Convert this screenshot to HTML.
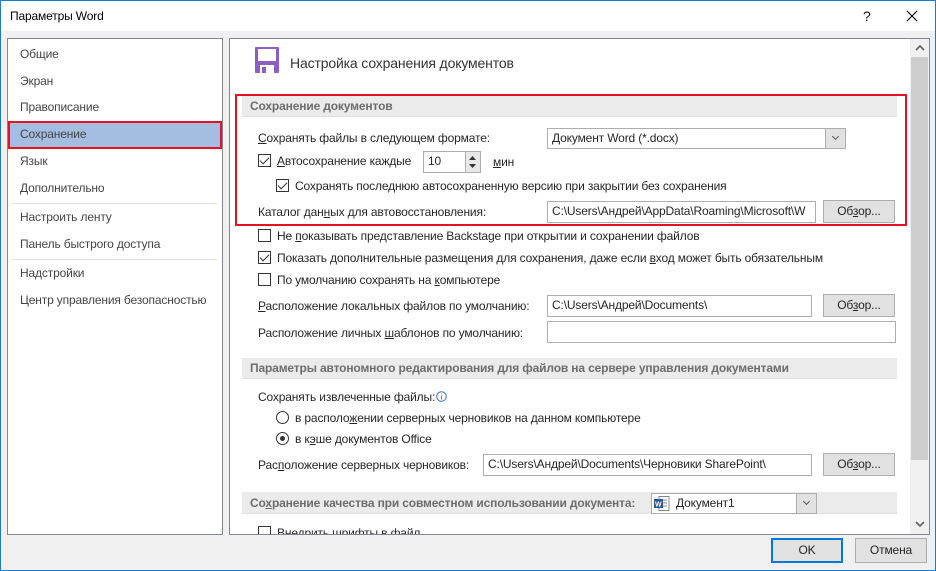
<!DOCTYPE html>
<html><head><meta charset="utf-8"><style>
*{margin:0;padding:0;box-sizing:border-box}
body{width:936px;height:571px;overflow:hidden;background:#f0f0f0;font-family:"Liberation Sans",sans-serif;font-size:12px;color:#262626;position:relative;letter-spacing:-0.15px}
.a{position:absolute;white-space:nowrap}
.win{position:absolute;left:0;top:0;width:936px;height:571px;border:1px solid #1979ca;pointer-events:none}
.tb{position:absolute;left:1px;top:1px;width:934px;height:30px;background:#fff}
.panel{position:absolute;background:#fff;border:1px solid #828790}
.li{position:absolute;left:20px;color:#444;font-size:12px;line-height:14px}
.sep{position:absolute;left:12px;width:205px;height:1px;background:#e3e3e3}
.hdr{position:absolute;left:242px;width:655px;height:21px;background:#ebebeb;border-bottom:1px solid #e0e0e0;color:#6d6d6d;font-weight:bold;font-size:12px;padding:4px 8px;line-height:13px}
.t{position:absolute;line-height:14px}
.cb{position:absolute;width:13px;height:13px;border:1px solid #333;background:#fff}
.cb.c::after{content:"";position:absolute;left:3px;top:0px;width:4px;height:8px;border:solid #333;border-width:0 1.3px 1.3px 0;transform:rotate(45deg)}
.in{position:absolute;border:1px solid #adadad;background:#fff;padding:2px 4px;line-height:15px;overflow:hidden}
.btn{position:absolute;background:#e1e1e1;border:1px solid #adadad;text-align:center;line-height:21px}
.rd{position:absolute;width:13px;height:13px;border:1px solid #333;border-radius:50%;background:#fff}
.dd{position:absolute;top:0;right:0;width:20px;height:100%;background:#e1e1e1;border-left:1px solid #adadad}
.dd::after{content:"";position:absolute;left:7px;top:5px;width:4px;height:4px;border:solid #555;border-width:0 1px 1px 0;transform:rotate(45deg)}
u{text-decoration:underline}
</style></head><body>
<div class="tb"></div>
<div class="a" style="left:10px;top:9px;font-size:12px;color:#000">Параметры Word</div>
<div class="a" style="left:863px;top:8px;font-size:14px;color:#111">?</div>
<svg class="a" style="left:906px;top:10px" width="12" height="12"><path d="M1 1L11 11M11 1L1 11" stroke="#111" stroke-width="1.2"/></svg>

<div class="panel" style="left:7px;top:38px;width:216px;height:497px"></div>
<div class="li" style="top:47px">Общие</div>
<div class="li" style="top:74px">Экран</div>
<div class="li" style="top:100px">Правописание</div>
<div class="a" style="left:8px;top:121px;width:214px;height:28px;background:#a4bee2;border:2px solid #e81123"></div>
<div class="li" style="top:127px">Сохранение</div>
<div class="li" style="top:154px">Язык</div>
<div class="li" style="top:181px">Дополнительно</div>
<div class="sep" style="top:203px"></div>
<div class="li" style="top:210px">Настроить ленту</div>
<div class="li" style="top:237px">Панель быстрого доступа</div>
<div class="sep" style="top:259px"></div>
<div class="li" style="top:266px">Надстройки</div>
<div class="li" style="top:293px">Центр управления безопасностью</div>

<div class="panel" style="left:229px;top:38px;width:701px;height:497px"></div>
<div class="a" style="left:910px;top:39px;width:19px;height:495px;background:#f0f0f0"></div>
<div class="a" style="left:911px;top:57px;width:17px;height:403px;background:#cdcdcd"></div>
<svg class="a" style="left:914px;top:44px" width="12" height="8"><path d="M2 6L6 2L10 6" stroke="#606060" stroke-width="1.6" fill="none"/></svg>
<svg class="a" style="left:914px;top:520px" width="12" height="8"><path d="M2 2L6 6L10 2" stroke="#606060" stroke-width="1.6" fill="none"/></svg>

<svg class="a" style="left:255px;top:47px" width="24" height="26"><rect x="0" y="0" width="24" height="26" rx="1" fill="#8f5fbf"/><rect x="3" y="2" width="18" height="12" fill="#fff"/><rect x="5" y="18" width="14" height="8" fill="#fff"/><rect x="7" y="20" width="4" height="6" fill="#8f5fbf"/></svg>
<div class="a" style="left:290px;top:55px;font-size:14px;color:#333">Настройка сохранения документов</div>

<div class="hdr" style="top:96px">Сохранение документов</div>
<div class="t" style="left:258px;top:131px"><u>С</u>охранять файлы в следующем формате:</div>
<div class="in" style="left:547px;top:128px;width:299px;height:21px">Документ Word (*.docx)<div class="dd"></div></div>
<div class="cb c" style="left:258px;top:154px"></div>
<div class="t" style="left:277px;top:154px"><u>А</u>втосохранение каждые</div>
<div class="in" style="left:423px;top:151px;width:58px;height:22px">10</div>
<div class="a" style="left:465px;top:152px;width:15px;height:20px;background:#e8e8e8;border-left:1px solid #adadad"></div>
<svg class="a" style="left:467px;top:154px" width="11" height="16"><path d="M2 6L5.5 2L9 6Z M2 10L5.5 14L9 10Z" fill="#333"/></svg>
<div class="t" style="left:493px;top:155px"><u>м</u>ин</div>
<div class="cb c" style="left:276px;top:179px"></div>
<div class="t" style="left:295px;top:179px">Сохранять последнюю автосохраненную версию при закрытии без сохранения</div>
<div class="t" style="left:258px;top:205px">Каталог дан<u>н</u>ых для автовосстановления:</div>
<div class="in" style="left:547px;top:201px;width:269px;height:22px">C:\Users\Андрей\AppData\Roaming\Microsoft\W</div>
<div class="btn" style="left:823px;top:200px;width:72px;height:23px">Об<u>з</u>ор...</div>
<div class="a" style="left:235px;top:94px;width:672px;height:132px;border:2px solid #e81123"></div>

<div class="cb" style="left:258px;top:229px"></div>
<div class="t" style="left:277px;top:229px">Не <u>п</u>оказывать представление Backstage при открытии и сохранении файлов</div>
<div class="cb c" style="left:258px;top:251px"></div>
<div class="t" style="left:277px;top:251px">Показать дополнительные размещения для сохранения, даже если <u>в</u>ход может быть обязательным</div>
<div class="cb" style="left:258px;top:273px"></div>
<div class="t" style="left:277px;top:273px">По умолчанию сохранять на <u>к</u>омпьютере</div>
<div class="t" style="left:258px;top:299px"><u>Р</u>асположение локальных файлов по умолчанию:</div>
<div class="in" style="left:547px;top:295px;width:265px;height:22px">C:\Users\Андрей\Documents\</div>
<div class="btn" style="left:823px;top:294px;width:72px;height:23px">Об<u>з</u>ор...</div>
<div class="t" style="left:258px;top:326px">Расположение личных <u>ш</u>аблонов по умолчанию:</div>
<div class="in" style="left:547px;top:321px;width:349px;height:22px"></div>

<div class="hdr" style="top:358px">Параметры автономного редактирования для файлов на сервере управления документами</div>
<div class="t" style="left:258px;top:390px">Сохранять извлеченные файлы:</div>
<svg class="a" style="left:436px;top:391px" width="11" height="11"><circle cx="5.5" cy="5.5" r="4.8" fill="none" stroke="#3a7bd5"/><path d="M5.5 4.5V8.5M5.5 2.6V3.4" stroke="#3a7bd5"/></svg>
<div class="rd" style="left:276px;top:411px"></div>
<div class="t" style="left:295px;top:411px">в располо<u>ж</u>ении серверных черновиков на данном компьютере</div>
<div class="rd" style="left:276px;top:432px"><div class="a" style="left:3px;top:3px;width:5px;height:5px;border-radius:50%;background:#333"></div></div>
<div class="t" style="left:295px;top:432px">в к<u>э</u>ше документов Office</div>
<div class="t" style="left:258px;top:458px">Рас<u>п</u>оложение серверных черновиков:</div>
<div class="in" style="left:483px;top:454px;width:329px;height:22px">C:\Users\Андрей\Documents\Черновики SharePoint\</div>
<div class="btn" style="left:823px;top:453px;width:72px;height:23px">Об<u>з</u>ор...</div>

<div class="hdr" style="top:492px;height:22px;padding-top:5px">Со<u>х</u>ранение качества при совместном использовании документа:</div>
<div class="in" style="left:651px;top:493px;width:166px;height:21px;padding-left:24px">Документ1<div class="dd"></div></div>
<svg class="a" style="left:654px;top:496px" width="16" height="15"><rect x="5" y="0.5" width="10" height="14" fill="#fff" stroke="#888"/><path d="M8 4H13M8 7H13M8 10H13" stroke="#888"/><rect x="0" y="3" width="9" height="9" fill="#2b5797"/><text x="1" y="10.5" font-size="7" fill="#fff" font-family="Liberation Sans" font-weight="bold">W</text></svg>
<div class="a" style="left:230px;top:524px;width:680px;height:10px;overflow:hidden"><div class="cb" style="left:28px;top:2px"></div><div class="t" style="left:47px;top:2px">Внедрить шрифты в файл</div></div>

<div class="btn" style="left:771px;top:538px;width:72px;height:25px;border:2px solid #0078d7;line-height:21px">OK</div>
<div class="btn" style="left:855px;top:538px;width:72px;height:25px;line-height:23px">Отмена</div>
<div class="win"></div>
</body></html>
